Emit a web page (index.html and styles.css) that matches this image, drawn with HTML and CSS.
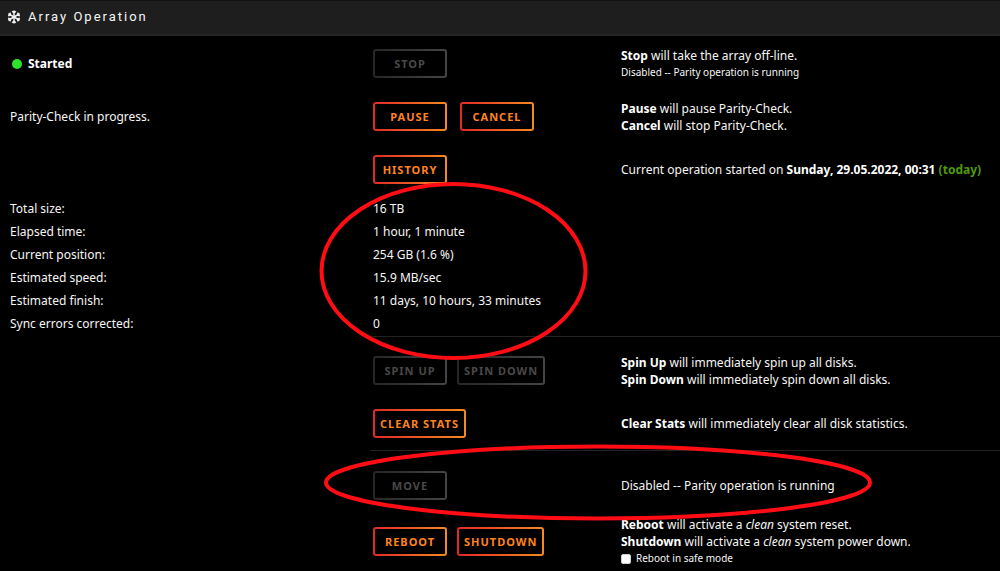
FILE: index.html
```html
<!DOCTYPE html>
<html lang="en">
<head>
<meta charset="utf-8">
<title>Array Operation</title>
<link rel="stylesheet" href="styles.css">
</head>
<body>
<header class="title-bar">
  <svg class="title-icon" viewBox="0 0 14 14" aria-hidden="true">
    <g id="arm"><path d="M7 7V0.500M5.200 1.300L7 3L8.800 1.300"/></g>
    <use href="#arm" transform="rotate(60 7 7)"/>
    <use href="#arm" transform="rotate(120 7 7)"/>
    <use href="#arm" transform="rotate(180 7 7)"/>
    <use href="#arm" transform="rotate(240 7 7)"/>
    <use href="#arm" transform="rotate(300 7 7)"/>
  </svg>
  <h1 class="title">Array Operation</h1>
</header>
<main class="panel">
  <section class="group">
    <div class="row">
      <div class="status"><span class="dot"></span><b>Started</b></div>
      <div class="actions"><button class="btn" disabled>Stop</button></div>
      <div class="note"><p><b>Stop</b> will take the array off-line.</p><p class="small">Disabled -- Parity operation is running</p></div>
    </div>
    <div class="row">
      <div>Parity-Check in progress.</div>
      <div class="actions wide"><button class="btn">Pause</button><button class="btn">Cancel</button></div>
      <div class="note"><p><b>Pause</b> will pause Parity-Check.</p><p><b>Cancel</b> will stop Parity-Check.</p></div>
    </div>
    <div class="row">
      <div></div>
      <div class="actions"><button class="btn">History</button></div>
      <div class="note"><p>Current operation started on <b>Sunday, 29.05.2022, 00:31 <span class="today">(today)</span></b></p></div>
    </div>
    <dl class="stats">
      <div class="stat"><dt>Total size:</dt><dd>16 TB</dd></div>
      <div class="stat"><dt>Elapsed time:</dt><dd>1 hour, 1 minute</dd></div>
      <div class="stat"><dt>Current position:</dt><dd>254 GB (1.6 %)</dd></div>
      <div class="stat"><dt>Estimated speed:</dt><dd>15.9 MB/sec</dd></div>
      <div class="stat"><dt>Estimated finish:</dt><dd>11 days, 10 hours, 33 minutes</dd></div>
      <div class="stat"><dt>Sync errors corrected:</dt><dd>0</dd></div>
    </dl>
  </section>
  <hr class="rule">
  <section class="group spaced">
    <div class="row">
      <div></div>
      <div class="actions"><button class="btn" disabled>Spin Up</button><button class="btn" disabled>Spin Down</button></div>
      <div class="note"><p><b>Spin Up</b> will immediately spin up all disks.</p><p><b>Spin Down</b> will immediately spin down all disks.</p></div>
    </div>
    <div class="row">
      <div></div>
      <div class="actions"><button class="btn">Clear Stats</button></div>
      <div class="note"><p><b>Clear Stats</b> will immediately clear all disk statistics.</p></div>
    </div>
  </section>
  <hr class="rule">
  <section class="group spaced">
    <div class="row">
      <div></div>
      <div class="actions"><button class="btn" disabled>Move</button></div>
      <div class="note"><p>Disabled -- Parity operation is running</p></div>
    </div>
    <div class="row tall">
      <div></div>
      <div class="actions"><button class="btn">Reboot</button><button class="btn">Shutdown</button></div>
      <div class="note">
        <p><b>Reboot</b> will activate a <em>clean</em> system reset.</p>
        <p><b>Shutdown</b> will activate a <em>clean</em> system power down.</p>
        <label class="small safe"><input class="check" type="checkbox">Reboot in safe mode</label>
      </div>
    </div>
  </section>
  <hr class="rule">
</main>
<svg class="marks" viewBox="0 0 1000 571" aria-hidden="true">
  <ellipse cx="453.500" cy="271" rx="132" ry="87"/>
  <ellipse cx="598" cy="482.500" rx="272" ry="36"/>
</svg>
</body>
</html>
```
FILE: styles.css
```css
* { box-sizing: border-box; }

body {
  margin: 0;
  position: relative;
  background: #000;
  color: #f6f6f6;
  font: 12px/17px "Noto Sans", sans-serif;
}

p, dl, dd { margin: 0; }

.title-bar {
  display: flex;
  align-items: center;
  gap: 7px;
  height: 36px;
  padding: 0 7px 2px;
  background: #1e1e1e;
  border-top: 1px solid #121212;
  border-bottom: 2px solid #262626;
}

.title-icon {
  width: 14px;
  height: 14px;
  fill: none;
  stroke: #f2f2f2;
  stroke-width: 1.5;
}

.title {
  margin: 0;
  font: 400 13px/17px Roboto, "Noto Sans", sans-serif;
  letter-spacing: 2px;
}

.row, .stat {
  display: grid;
  grid-template-columns: 363fr 248fr 369fr;
  align-items: center;
  padding: 0 10px;
}

.row { min-height: 53px; }
.row.tall { min-height: 59px; }
.group:first-child { padding-top: 1px; }
.group.spaced { padding-top: 7px; }
.rule + .group.spaced:last-of-type { padding-top: 8px; }

.stats { padding: 1px 0; }
.stat { min-height: 23px; }

.status {
  display: flex;
  align-items: center;
  gap: 6px;
  padding-left: 2px;
}

.dot {
  width: 10px;
  height: 10px;
  border-radius: 50%;
  background: #2be52b;
}

.status b, .note b { color: #fff; }

.actions { display: flex; gap: 10px; }
.actions.wide { gap: 13px; }

.btn {
  min-width: 74px;
  height: 29px;
  padding: 0 5px;
  border: 2px solid transparent;
  border-radius: 3px;
  background:
    linear-gradient(#000, #000) padding-box,
    linear-gradient(90deg, #e22828, #f58a22) border-box;
  color: #ff8420;
  font: bold 11px/17px "Noto Sans", sans-serif;
  letter-spacing: 1px;
  text-transform: uppercase;
  white-space: nowrap;
}

.btn:disabled {
  background:
    linear-gradient(#000, #000) padding-box,
    linear-gradient(90deg, #262626, #444) border-box;
  color: #4a4848;
}

.small { font-size: 10px; }

.note .today { color: #4f9a0c; }

.safe {
  display: flex;
  align-items: center;
  gap: 5px;
}

.check {
  appearance: none;
  width: 10px;
  height: 10px;
  margin: 0;
  border: 1px solid #ccc;
  border-radius: 2px;
  background: #fff;
}

.rule {
  height: 1px;
  margin: 0 0 0 37%;
  border: 0;
  background: #232323;
}

.marks {
  position: absolute;
  inset: 0;
  width: 100%;
  pointer-events: none;
  fill: none;
  stroke: #ff0c14;
  stroke-width: 4;
}
```
